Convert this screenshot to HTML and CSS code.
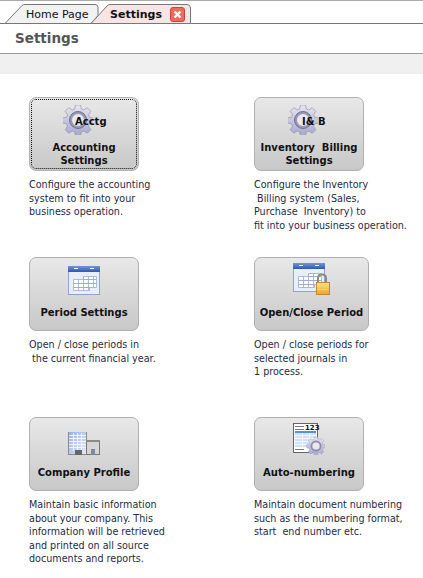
FILE: index.html
```html
<!DOCTYPE html>
<html lang="en">
<head>
  <meta charset="UTF-8">
  <title>Settings</title>
  <link rel="stylesheet" href="styles.css">
</head>
<body>
  <svg width="0" height="0" class="defs">
    <defs>
      <linearGradient id="gear" x1="0" y1="0" x2="0" y2="1"><stop offset="0" stop-color="#e6e6f4"/><stop offset="1" stop-color="#a6a6d0"/></linearGradient>
      <linearGradient id="head" x1="0" y1="0" x2="0" y2="1"><stop offset="0" stop-color="#6f96dc"/><stop offset="1" stop-color="#2f58ac"/></linearGradient>
      <linearGradient id="lock" x1="0" y1="0" x2="0" y2="1"><stop offset="0" stop-color="#fbe28a"/><stop offset="1" stop-color="#eda52c"/></linearGradient>
      <linearGradient id="tower" x1="0" y1="0" x2="1" y2="1"><stop offset="0" stop-color="#8eaeea"/><stop offset="1" stop-color="#e4ecfa"/></linearGradient>
      <g id="gear-icon">
        <path fill="url(#gear)" stroke="#8a8aa0" stroke-width=".6" d="M12.5 0h5l.8 4 2.5 1 3.4-2.3 3.600 3.600-2.300 3.400 1 2.500 4 .8v5l-4 .8-1 2.500 2.300 3.400-3.600 3.600-3.400-2.300-2.500 1-.8 4h-5l-.8-4-2.500-1-3.400 2.300-3.600-3.600 2.300-3.400-1-2.500-4-.8v-5l4-.8 1-2.500-2.300-3.400 3.600-3.600 3.400 2.300 2.500-1z"/>
        <circle cx="15" cy="15" r="8.5" fill="#9a9ab0" stroke="#707088"/>
        <circle cx="15" cy="15" r="6" fill="#e8e8ee"/>
      </g>
      <g id="cal-icon">
        <rect x=".5" y=".5" width="31" height="28" fill="#e8eefb" stroke="#8ea4d4"/>
        <rect x="0" y="0" width="32" height="6" fill="url(#head)"/>
        <path fill="#fff" d="M6 2h4v1H6zM22 2h4v1h-4z"/>
        <path fill="#fff" stroke="#9aaad4" stroke-width=".8" d="M15.500 10.500h13v3h-13zM5.500 13.500h23v4h-23zM5.500 17.500h23v4h-23zM5.500 21.500h16v3h-16z"/>
        <path fill="none" stroke="#9aaad4" stroke-width=".8" d="M10.500 13.500v11M15.500 10.500v14M20.500 10.500v14M25.500 10.500v11"/>
      </g>
    </defs>
  </svg>

  <div class="tabstrip">
    <svg class="tab-shapes" width="423" height="24" viewBox="0 0 423 24">
      <path fill="#f2f2f2" stroke="#777" d="M5 23.500 22 5.500q1-1 3-1h70q3 0 3 3v8l-7 8z"/>
      <path fill="#f7e4e4" stroke="#777" d="M91 23.500 107 6q1-1.500 3-1.500h77q3.500 0 3.500 3.500v15.500z"/>
      <path fill="none" stroke="#777" d="M0 23.500h5M190.500 23.500H423"/>
    </svg>
    <span class="tab">Home Page</span>
    <span class="tab tab-active">Settings</span>
    <span class="tab-close">
      <svg width="15" height="15" viewBox="0 0 15 15"><rect x=".5" y=".5" width="14" height="14" rx="2.500" fill="#ee6a5e" stroke="#c4483e"/><path stroke="#fff" stroke-width="2.400" d="m4.500 4.500 6 6m0-6-6 6"/></svg>
    </span>
  </div>

  <div class="page-title">Settings</div>
  <div class="band"></div>

  <div class="settings-grid">
    <div class="item">
      <div class="tile tile-focus">
        <span class="icon-gear">
          <svg width="30" height="30" viewBox="0 0 30 30"><use href="#gear-icon"/></svg>
          <span class="gear-label">Acctg</span>
        </span>
        <span class="tile-label">Accounting<br>Settings</span>
      </div>
      <p>Configure the accounting<br>system to fit into your<br>business operation.</p>
    </div>
    <div class="item">
      <div class="tile">
        <span class="icon-gear">
          <svg width="30" height="30" viewBox="0 0 30 30"><use href="#gear-icon"/></svg>
          <span class="gear-label gear-label-ib">I&amp; B</span>
        </span>
        <span class="tile-label">Inventory&nbsp; Billing<br>Settings</span>
      </div>
      <p>Configure the Inventory<br>&nbsp;Billing system (Sales,<br>Purchase&nbsp; Inventory) to<br>fit into your business operation.</p>
    </div>
    <div class="item">
      <div class="tile tile-single">
        <svg class="tile-icon" width="32" height="29" viewBox="0 0 32 29"><use href="#cal-icon"/></svg>
        <span class="tile-label">Period Settings</span>
      </div>
      <p>Open / close periods in<br>&nbsp;the current financial year.</p>
    </div>
    <div class="item">
      <div class="tile tile-single tile-wide">
        <svg class="tile-icon" width="37" height="32" viewBox="0 0 37 32">
          <use href="#cal-icon"/>
          <path fill="none" stroke="#8c8c80" stroke-width="2" d="M25 20v-5q0-3.500 4-3.500t4 3.500v5"/>
          <rect x="23.500" y="19.500" width="13" height="12" fill="url(#lock)" stroke="#c08a2a"/>
          <path stroke="#f8d470" d="M25 23.500h10M25 26.500h10"/>
        </svg>
        <span class="tile-label">Open/Close Period</span>
      </div>
      <p>Open / close periods for<br>selected journals in<br>1 process.</p>
    </div>
    <div class="item">
      <div class="tile tile-single">
        <svg class="tile-icon" width="32" height="26" viewBox="0 0 32 26">
          <rect x=".5" y=".5" width="18" height="25" fill="url(#tower)" stroke="#8a8a8a"/>
          <rect x="0" y="0" width="19" height="3" fill="#dfe3e8"/>
          <path stroke="#fff" stroke-width=".8" d="M1 6.500h17M1 9.500h17M1 12.500h17M1 15.500h17M1 18.500h17M5.500 4v18M9.500 4v18M13.500 4v18"/>
          <rect x="7" y="21" width="7" height="5" fill="#666"/>
          <rect x="18.500" y="11.500" width="13" height="14" fill="#d6d6d6" stroke="#777"/>
          <rect x="18" y="11" width="14" height="2" fill="#8a8a8a"/>
          <rect x="23" y="20" width="4" height="6" fill="#7d8b9a"/>
        </svg>
        <span class="tile-label">Company Profile</span>
      </div>
      <p>Maintain basic information<br>about your company. This<br>information will be retrieved<br>and printed on all source<br>documents and reports.</p>
    </div>
    <div class="item">
      <div class="tile tile-single">
        <svg class="tile-icon" width="32" height="32" viewBox="0 0 32 32">
          <rect x=".5" y=".5" width="24" height="29" fill="#fff" stroke="#666"/>
          <path stroke="#777" d="M2 3.500h9M2 6.500h9M2 26.500h9"/>
          <text x="12" y="7" class="num-label">123</text>
          <rect x="2" y="8" width="21" height="16" fill="#cfe0f8"/>
          <rect x="2" y="8" width="21" height="2" fill="#5a90d8"/>
          <path stroke="#fff" stroke-width=".8" d="M2 12.500h21M2 15.500h21M2 18.500h21M2 21.500h21M9.500 10v14M16.500 10v14"/>
          <g transform="translate(14 14) scale(.6)"><use href="#gear-icon"/></g>
        </svg>
        <span class="tile-label">Auto-numbering</span>
      </div>
      <p>Maintain document numbering<br>such as the numbering format,<br>start&nbsp; end number etc.</p>
    </div>
  </div>
</body>
</html>
```

FILE: styles.css
```css
* {
  margin: 0;
  padding: 0;
  box-sizing: border-box;
}

body {
  width: 423px;
  height: 578px;
  overflow: hidden;
  background-color: #fff;
  font-family: "DejaVu Sans", Verdana, sans-serif;
  font-size: 10px;
  color: #1f2a44;
}

.defs {
  position: absolute;
}

.tabstrip {
  position: relative;
  display: flex;
  align-items: center;
  height: 24px;
  padding: 4px 0 0 26px;
  border-top: 1px solid #aaa;
  color: #111;
  font-size: 11px;
}

.tab-shapes {
  position: absolute;
  top: -1px;
  left: 0;
}

.tab {
  position: relative;
  width: 84px;
}

.tab-active {
  width: 60px;
  font-weight: bold;
}

.tab-close {
  position: relative;
  display: flex;
}

.page-title {
  height: 30px;
  padding: 6px 0 0 15px;
  border-bottom: 1px solid #999;
  color: #555;
  font-size: 13.5px;
  font-weight: bold;
}

.band {
  height: 20px;
  background-color: #f0f0f0;
}

.settings-grid {
  display: grid;
  grid-template-columns: 225px 1fr;
  grid-auto-rows: 160px;
  padding: 23px 0 0 29px;
}

.tile {
  display: flex;
  flex-direction: column;
  align-items: center;
  width: 110px;
  height: 74px;
  padding-top: 7px;
  border: 1px solid #b0b0b0;
  border-radius: 7px;
  background: linear-gradient(#e8e8e8, #c8c8c8);
  color: #111;
  font-weight: bold;
  line-height: 13px;
  text-align: center;
}

.tile-single {
  justify-content: flex-end;
  padding: 0 0 11px;
}

.tile-wide {
  width: 115px;
}

.tile-focus {
  outline: 1px dotted #111;
  outline-offset: -3px;
}

.tile-icon {
  display: block;
  margin-bottom: 11px;
}

.icon-gear {
  position: relative;
  display: block;
  width: 30px;
  height: 30px;
  margin: 0 12px 6px 0;
}

.gear-label {
  position: absolute;
  top: 10px;
  left: 12px;
  white-space: nowrap;
}

.gear-label-ib {
  left: 14px;
}

.num-label {
  font-size: 7px;
  font-weight: bold;
  fill: #111;
}

.item p {
  margin-top: 7px;
  font-size: 9.6px;
  line-height: 13.500px;
  white-space: nowrap;
}
```
